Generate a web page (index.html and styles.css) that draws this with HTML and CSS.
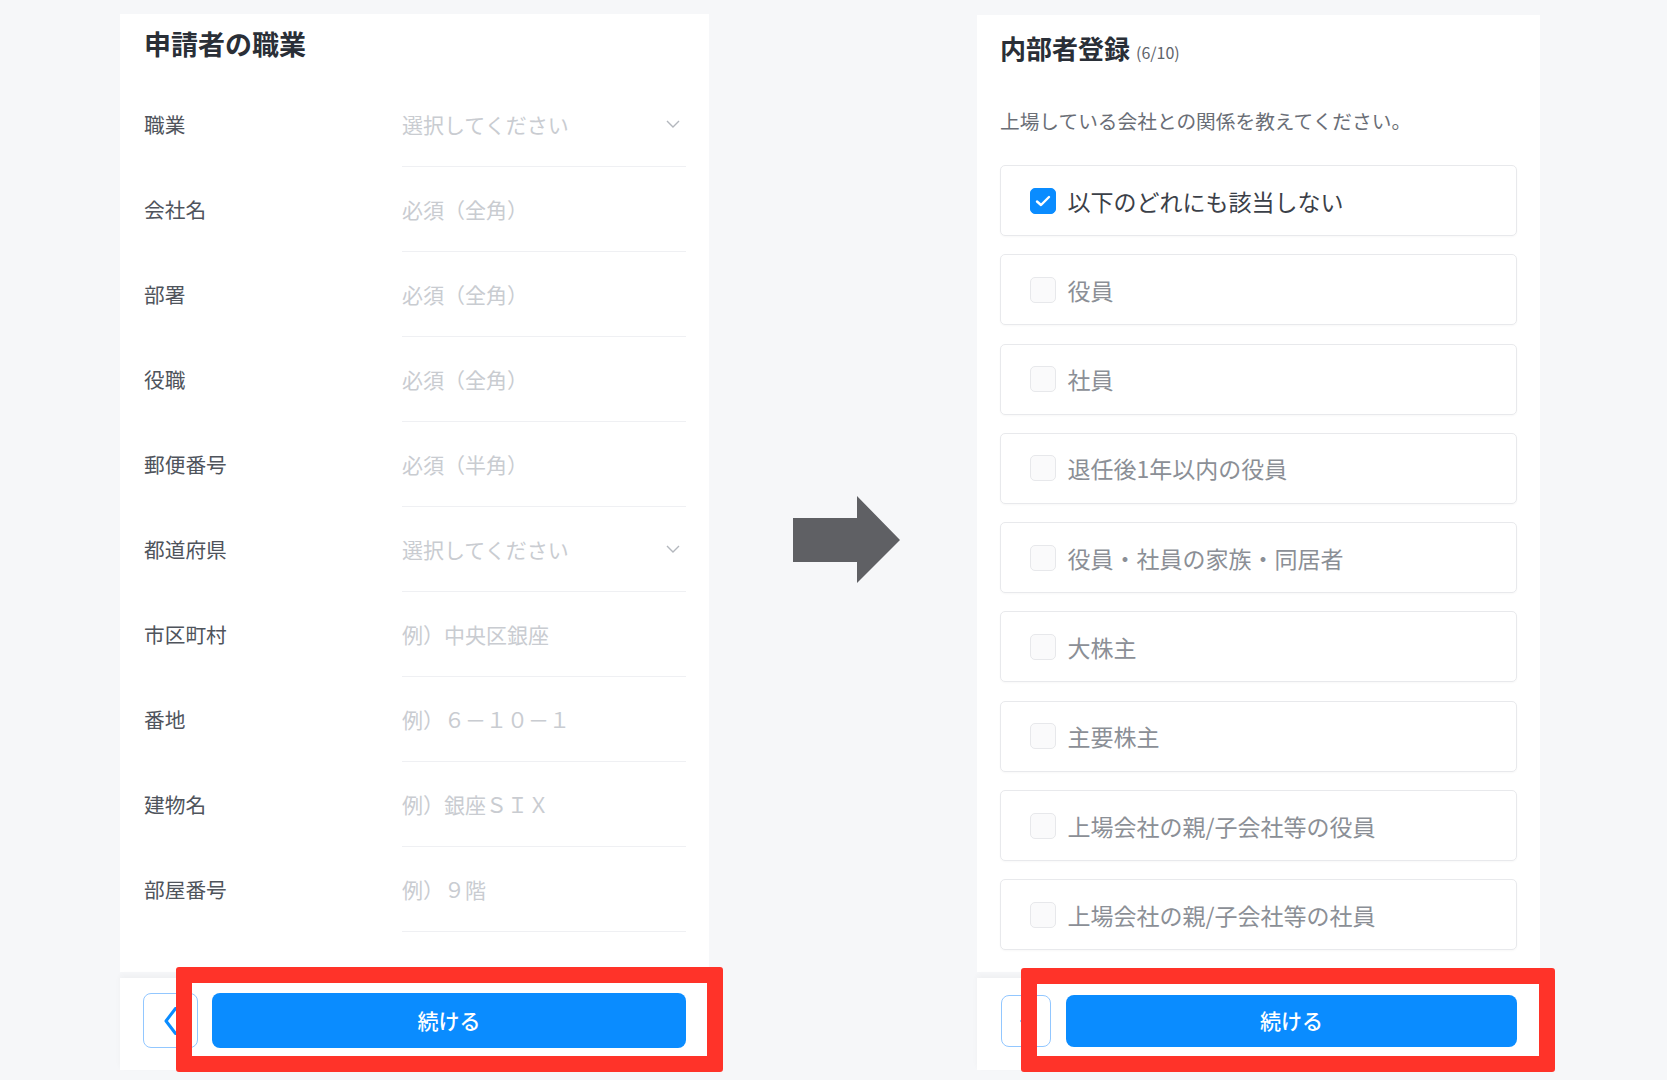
FILE: index.html
```html
<!DOCTYPE html>
<html lang="ja">
<head>
<meta charset="utf-8">
<title>申請者の職業 / 内部者登録</title>
<link rel="stylesheet" href="styles.css">
</head>
<body>
<div class="stage">
  <section class="panel panel-left">
    <div class="card card-left">
      <h1 class="title-left">申請者の職業</h1>
      <div class="rows">
        <div class="row"><span class="label">職業</span><span class="field"><span class="ph">選択してください</span><svg class="chev" width="14" height="8" viewBox="0 0 14 8"><polyline points="1,1 7,7 13,1" fill="none" stroke="#b3b7bd" stroke-width="1.4"/></svg></span></div>
        <div class="row"><span class="label">会社名</span><span class="field"><span class="ph">必須（全角）</span></span></div>
        <div class="row"><span class="label">部署</span><span class="field"><span class="ph">必須（全角）</span></span></div>
        <div class="row"><span class="label">役職</span><span class="field"><span class="ph">必須（全角）</span></span></div>
        <div class="row"><span class="label">郵便番号</span><span class="field"><span class="ph">必須（半角）</span></span></div>
        <div class="row"><span class="label">都道府県</span><span class="field"><span class="ph">選択してください</span><svg class="chev" width="14" height="8" viewBox="0 0 14 8"><polyline points="1,1 7,7 13,1" fill="none" stroke="#b3b7bd" stroke-width="1.4"/></svg></span></div>
        <div class="row"><span class="label">市区町村</span><span class="field"><span class="ph">例）中央区銀座</span></span></div>
        <div class="row"><span class="label">番地</span><span class="field"><span class="ph">例）６－１０－１</span></span></div>
        <div class="row"><span class="label">建物名</span><span class="field"><span class="ph">例）銀座ＳＩＸ</span></span></div>
        <div class="row"><span class="label">部屋番号</span><span class="field"><span class="ph">例）９階</span></span></div>
      </div>
    </div>
    <div class="footer footer-left">
      <button class="back back-left"><svg width="13" height="28" viewBox="0 0 13 28"><polyline points="11.5,1.5 2,14 11.5,26.5" fill="none" stroke="#0a8cff" stroke-width="3" stroke-linejoin="round" stroke-linecap="round"/></svg></button>
      <button class="go go-left">続ける</button>
      <div class="redbox redbox-left"></div>
    </div>
  </section>

  <div class="arrow-col">
    <svg class="arrow" width="108" height="88" viewBox="0 0 108 88"><polygon points="0,22 64,22 64,0 107,44 64,87 64,66 0,66" fill="#5f6064"/></svg>
  </div>

  <section class="panel panel-right">
    <div class="card card-right">
      <h1 class="title-right">内部者登録<span class="step">(6/10)</span></h1>
      <p class="sub">上場している会社との関係を教えてください。</p>
      <div class="opts">
        <div class="opt checked"><span class="box"><svg width="16" height="12" viewBox="0 0 16 12"><polyline points="2,6.5 6,10 14,2" fill="none" stroke="#fff" stroke-width="2.4" stroke-linecap="round" stroke-linejoin="round"/></svg></span><span class="opt-text">以下のどれにも該当しない</span></div>
        <div class="opt"><span class="box"></span><span class="opt-text">役員</span></div>
        <div class="opt"><span class="box"></span><span class="opt-text">社員</span></div>
        <div class="opt"><span class="box"></span><span class="opt-text">退任後1年以内の役員</span></div>
        <div class="opt"><span class="box"></span><span class="opt-text">役員・社員の家族・同居者</span></div>
        <div class="opt"><span class="box"></span><span class="opt-text">大株主</span></div>
        <div class="opt"><span class="box"></span><span class="opt-text">主要株主</span></div>
        <div class="opt"><span class="box"></span><span class="opt-text">上場会社の親/子会社等の役員</span></div>
        <div class="opt"><span class="box"></span><span class="opt-text">上場会社の親/子会社等の社員</span></div>
      </div>
    </div>
    <div class="footer footer-right">
      <button class="back back-right"><svg width="13" height="28" viewBox="0 0 13 28"><polyline points="11.5,1.5 2,14 11.5,26.5" fill="none" stroke="#0a8cff" stroke-width="3" stroke-linejoin="round" stroke-linecap="round"/></svg></button>
      <button class="go go-right">続ける</button>
      <div class="redbox redbox-right"></div>
    </div>
  </section>
</div>
</body>
</html>
```

FILE: styles.css
```css
* { box-sizing: border-box; }
html, body {
  margin: 0;
  padding: 0;
  background: #f6f7f9;
  font-family: "Noto Sans CJK JP", "Noto Sans", sans-serif;
  text-spacing-trim: space-all;
}
body { width: 1667px; height: 1080px; overflow: hidden; }

.stage {
  display: flex;
  align-items: flex-start;
  padding-left: 120px;
}

.panel { display: flex; flex-direction: column; }
.panel-left { width: 589px; margin-top: 14px; }
.panel-right { width: 563px; margin-top: 15px; }

.card { background: #fff; }

/* left card */
.card-left { padding: 10px 23px 40px 24px; }
.title-left {
  margin: 0;
  font-size: 27px;
  line-height: 40px;
  font-weight: 700;
  color: #2a2f37;
  height: 58px;
}
.row {
  display: grid;
  grid-template-columns: 258px 1fr;
  height: 85px;
  align-items: stretch;
}
.label {
  display: flex;
  align-items: center;
  font-size: 20.7px;
  color: #4f545c;
  padding-bottom: 1px;
}
.field {
  display: flex;
  align-items: center;
  justify-content: space-between;
  border-bottom: 1.5px solid #eff0f3;
  padding-right: 6px;
  padding-bottom: 1px;
}
.ph {
  font-size: 21px;
  color: #c9ccd1;
  font-feature-settings: "fwid" 1;
}
.chev { display: block; }

/* footer */
.footer {
  position: relative;
  display: flex;
  background: #fff;
  height: 92px;
  margin-top: 6px;
  box-shadow: 0 -3px 6px rgba(0, 0, 0, 0.03);
}
.footer-left { padding: 15px 23px 0 23px; gap: 14px; }
.footer-right { padding: 17px 23px 0 24px; gap: 15px; }

.back {
  display: flex;
  align-items: center;
  justify-content: center;
  background: #fff;
  border: 1.5px solid #92c7ff;
  border-radius: 8px;
  padding: 0;
}
.back-left { width: 55px; height: 55px; }
.back-right { width: 50px; height: 52px; }

.go {
  flex: 1;
  background: #0a8cff;
  color: #fff;
  border: none;
  border-radius: 8px;
  font-family: "Noto Sans CJK JP", "Noto Sans", sans-serif;
  font-size: 21px;
  font-weight: 500;
  padding: 0 0 2px 0;
}
.go-left { height: 55px; }
.go-right { height: 52px; }

.redbox {
  position: absolute;
  border: 16px solid #ff3329;
  border-radius: 3px;
  pointer-events: none;
}
.redbox-left { left: 56px; top: -11px; width: 547px; height: 105px; }
.redbox-right { left: 44px; top: -10px; width: 534px; height: 104px; }

/* arrow */
.arrow-col { width: 268px; padding: 496px 0 0 84px; }
.arrow { display: block; }

/* right card */
.card-right { padding: 13px 23px 22px 23px; }
.title-right {
  margin: 0;
  font-size: 26px;
  line-height: 40px;
  font-weight: 700;
  color: #2a2f37;
}
.step {
  font-size: 16px;
  font-weight: 400;
  color: #60646b;
  margin-left: 6px;
}
.sub {
  margin: 0;
  padding-top: 35px;
  font-size: 19.7px;
  line-height: 28px;
  color: #6a6e76;
}
.opts {
  display: flex;
  flex-direction: column;
  gap: 18.3px;
  margin-top: 30px;
}
.opt {
  display: flex;
  align-items: center;
  height: 71px;
  border: 1.5px solid #e8e9ec;
  border-radius: 5px;
  padding-left: 28.5px;
  box-shadow: 0 1px 2px rgba(0, 0, 0, 0.03);
}
.box {
  width: 26px;
  height: 26px;
  border-radius: 5px;
  border: 1.5px solid #e7e8eb;
  background: #fafafb;
  display: flex;
  align-items: center;
  justify-content: center;
  flex: none;
}
.opt-text {
  margin-left: 12px;
  font-size: 23px;
  color: #8b8f96;
}
.checked .box { background: #0a8cff; border-color: #0a8cff; }
.checked .opt-text { color: #3b4048; }
```
